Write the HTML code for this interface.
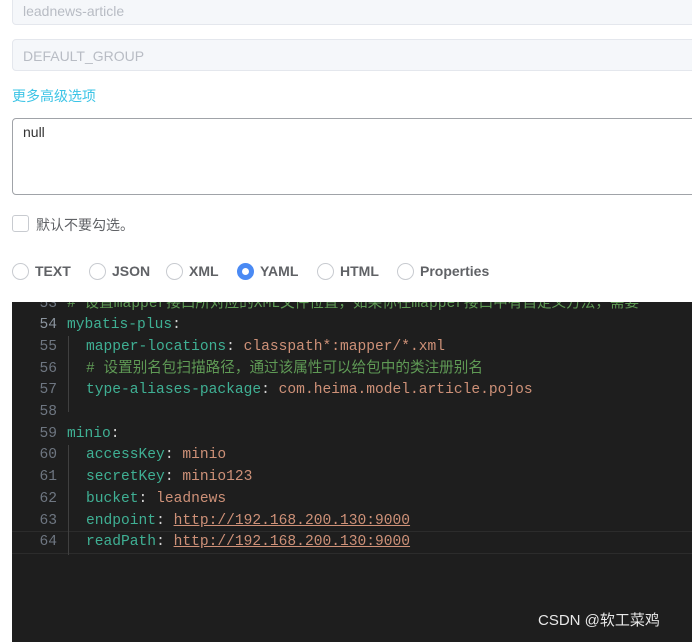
<!DOCTYPE html>
<html><head><meta charset="utf-8"><style>
body{margin:0;width:692px;height:637px;background:#fff;position:relative;overflow:hidden;font-family:"Liberation Sans","Noto Sans CJK SC",sans-serif;}
.inp{position:absolute;left:12px;width:690px;background:#f5f7fa;border:1px solid #e4e7ed;border-radius:4px;color:#b8bcc4;font-size:14px;box-sizing:border-box;padding-left:10px;}
.ta{position:absolute;left:12px;top:118px;width:690px;height:77px;border:1px solid #a0a3a8;border-radius:4px;box-sizing:border-box;padding:5px 10px;font-size:14px;color:#333;}
.cb{position:absolute;left:12px;top:215px;width:17px;height:17px;border:1px solid #c8cbd0;border-radius:3px;box-sizing:border-box;}
.radios{position:absolute;top:262px;left:12px;font-size:14px;font-weight:bold;color:#606266;}
.r{position:absolute;top:0;display:flex;align-items:center;height:18px;white-space:nowrap;}
.r i{display:inline-block;width:17px;height:17px;border:1px solid #c8cbd0;border-radius:50%;box-sizing:border-box;margin-right:6px;}
.r i.on{border:5px solid #4a8af4;background:#fff;}
.code{position:absolute;left:12px;top:302px;width:690px;height:340px;background:#1e1e1e;font-family:"Liberation Mono","Noto Sans CJK SC",monospace;font-size:14.6px;overflow:hidden;}
.ln{position:absolute;left:0;width:45px;text-align:right;color:#6e7681;}
.l{position:absolute;height:21.7px;line-height:21.7px;white-space:pre;margin-top:2.5px;}
.k{color:#3fb094}.v{color:#ce9178}.c{color:#5f9a55}.u{color:#ce9178;text-decoration:underline}.p{color:#d4d4d4}
.guide{position:absolute;left:56px;width:1px;background:#404040;}
</style></head><body>
<div class="inp" style="top:-8px;height:33px;line-height:36px;">leadnews-article</div>
<div class="inp" style="top:39px;height:32px;line-height:32px;">DEFAULT_GROUP</div>
<div style="position:absolute;left:12px;top:86px;font-size:14px;color:#3cc4e6;">更多高级选项</div>
<div class="ta">null</div>
<div class="cb"></div>
<div style="position:absolute;left:36px;top:215px;font-size:14px;color:#606266;">默认不要勾选。</div>
<div class="radios">
<div class="r" style="left:0"><i></i>TEXT</div>
<div class="r" style="left:77px"><i></i>JSON</div>
<div class="r" style="left:154px"><i></i>XML</div>
<div class="r" style="left:225px"><i class="on"></i>YAML</div>
<div class="r" style="left:305px"><i></i>HTML</div>
<div class="r" style="left:385px"><i></i>Properties</div>
</div>
<div class="code">
<div style="position:absolute;left:0;top:229px;width:690px;height:21px;border-top:1px solid #2c2c2c;border-bottom:1px solid #2c2c2c;"></div>
<div class="guide" style="top:34px;height:76px"></div>
<div class="guide" style="top:143px;height:110px"></div>
<div class="l ln" style="top:-11px">53</div><div class="l c" style="left:55px;top:-11px"># 设置mapper接口所对应的XML文件位置，如果你在mapper接口中有自定义方法，需要</div>
<div class="l ln" style="top:10.7px;color:#8b949e">54</div><div class="l" style="left:55px;top:10.7px"><span class="k">mybatis-plus</span><span class="p">:</span></div>
<div class="l ln" style="top:32.4px">55</div><div class="l" style="left:74px;top:32.4px"><span class="k">mapper-locations</span><span class="p">: </span><span class="v">classpath*:mapper/*.xml</span></div>
<div class="l ln" style="top:54.1px">56</div><div class="l c" style="left:74px;top:54.1px"># 设置别名包扫描路径，通过该属性可以给包中的类注册别名</div>
<div class="l ln" style="top:75.8px">57</div><div class="l" style="left:74px;top:75.8px"><span class="k">type-aliases-package</span><span class="p">: </span><span class="v">com.heima.model.article.pojos</span></div>
<div class="l ln" style="top:97.5px">58</div>
<div class="l ln" style="top:119.2px">59</div><div class="l" style="left:55px;top:119.2px"><span class="k">minio</span><span class="p">:</span></div>
<div class="l ln" style="top:140.9px">60</div><div class="l" style="left:74px;top:140.9px"><span class="k">accessKey</span><span class="p">: </span><span class="v">minio</span></div>
<div class="l ln" style="top:162.6px">61</div><div class="l" style="left:74px;top:162.6px"><span class="k">secretKey</span><span class="p">: </span><span class="v">minio123</span></div>
<div class="l ln" style="top:184.3px">62</div><div class="l" style="left:74px;top:184.3px"><span class="k">bucket</span><span class="p">: </span><span class="v">leadnews</span></div>
<div class="l ln" style="top:206px">63</div><div class="l" style="left:74px;top:206px"><span class="k">endpoint</span><span class="p">: </span><span class="u">http://192.168.200.130:9000</span></div>
<div class="l ln" style="top:227.7px">64</div><div class="l" style="left:74px;top:227.7px"><span class="k">readPath</span><span class="p">: </span><span class="u">http://192.168.200.130:9000</span></div>
<div style="position:absolute;left:526px;top:307px;color:#e8e8e8;font-family:'Liberation Sans','Noto Sans CJK SC',sans-serif;font-size:15px;">CSDN @软工菜鸡</div>
</div>
</body></html>
